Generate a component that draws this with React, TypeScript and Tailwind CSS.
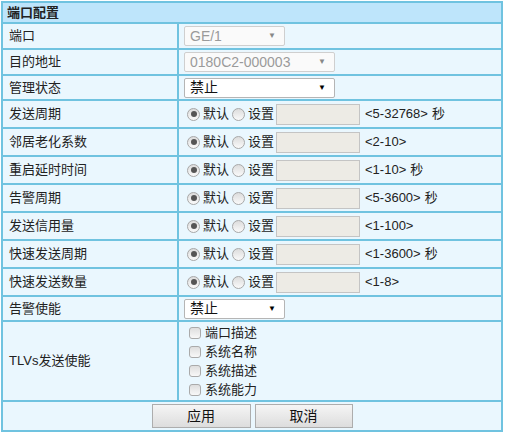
import * as React from 'react';

const FONT = { fontFamily: '"Liberation Sans", "Noto Sans CJK SC", sans-serif' };

interface TimerRow {
  label: string;
  range: string;
  unit?: string;
}

const TIMER_ROWS: TimerRow[] = [
  { label: '发送周期', range: '<5-32768>', unit: '秒' },
  { label: '邻居老化系数', range: '<2-10>' },
  { label: '重启延时时间', range: '<1-10>', unit: '秒' },
  { label: '告警周期', range: '<5-3600>', unit: '秒' },
  { label: '发送信用量', range: '<1-100>' },
  { label: '快速发送周期', range: '<1-3600>', unit: '秒' },
  { label: '快速发送数量', range: '<1-8>' },
];

const TLVS = ['端口描述', '系统名称', '系统描述', '系统能力'];

function Row({ label, h, children }: { label: string; h: string; children: React.ReactNode }) {
  return (
    <div className={`flex gap-[2px] ${h}`}>
      <div className="flex w-[174px] shrink-0 items-center bg-[#eaf7fe] pl-[6px]">{label}</div>
      <div className="flex flex-1 items-center bg-[#eaf7fe] pl-[5px]">{children}</div>
    </div>
  );
}

function Select({ value, width, disabled }: { value: string; width: string; disabled?: boolean }) {
  return (
    <div
      className={`flex h-[20px] items-center justify-between rounded-[2px] border pl-[5px] pr-[8px] text-[14px] ${width} ${
        disabled ? 'border-[#cfcfcf] bg-[#fafafa] text-[#9a9a9a]' : 'border-[#b5b5b5] bg-white text-[#111]'
      }`}
    >
      <span>{value}</span>
      <span className={`text-[8px] ${disabled ? 'text-[#888]' : 'text-black'}`}>▼</span>
    </div>
  );
}

function Radio({ checked }: { checked?: boolean }) {
  return (
    <span className="flex h-[13px] w-[13px] items-center justify-center rounded-full border border-[#a8a8a8] bg-gradient-to-b from-[#dcdcdc] to-[#fafafa]">
      {checked && <span className="h-[6px] w-[6px] rounded-full bg-[#555]" />}
    </span>
  );
}

export default function App() {
  return (
    <div className="p-[1px] text-[13px] text-[#222]" style={FONT}>
      <div className="flex w-[502px] flex-col gap-[2px] bg-[#70c3e0] p-[2px]">
        <div className="flex h-[19px] items-center bg-[#bee5fb] pl-[4px] font-bold">端口配置</div>
        <Row label="端口" h="h-[24px]">
          <Select value="GE/1" width="w-[101px]" disabled />
        </Row>
        <Row label="目的地址" h="h-[24px]">
          <Select value="0180C2-000003" width="w-[151px]" disabled />
        </Row>
        <Row label="管理状态" h="h-[23px]">
          <Select value="禁止" width="w-[151px]" />
        </Row>
        {TIMER_ROWS.map((r) => (
          <Row key={r.label} label={r.label} h="h-[26px]">
            <div className="ml-[3px] flex items-center">
              <Radio checked />
              <span className="ml-[3px]">默认</span>
              <span className="ml-[3px]">
                <Radio />
              </span>
              <span className="ml-[3px]">设置</span>
              <span className="ml-[2px] h-[21px] w-[84px] border border-[#c4c4c4] bg-[#edebe5]" />
              <span className="ml-[5px]">
                {r.range}
                {r.unit && <span className="ml-[4px]">{r.unit}</span>}
              </span>
            </div>
          </Row>
        ))}
        <Row label="告警使能" h="h-[23px]">
          <Select value="禁止" width="w-[101px]" />
        </Row>
        <Row label="TLVs发送使能" h="h-[78px]">
          <div className="ml-[5px] flex flex-col gap-[3px]">
            {TLVS.map((t) => (
              <div key={t} className="flex h-[16px] items-center">
                <span className="h-[12px] w-[12px] rounded-[3px] border border-[#aaaaaa] bg-gradient-to-b from-[#dedede] to-[#f8f8f8]" />
                <span className="ml-[4px]">{t}</span>
              </div>
            ))}
          </div>
        </Row>
        <div className="flex h-[28px] items-center justify-center gap-[4px] bg-[#eaf7fe]">
          <button className="h-[24px] w-[99px] border border-[#adadad] bg-gradient-to-b from-[#f5f5f5] to-[#dddddd] text-[14px] text-[#111]">
            应用
          </button>
          <button className="h-[24px] w-[98px] border border-[#adadad] bg-gradient-to-b from-[#f5f5f5] to-[#dddddd] text-[14px] text-[#111]">
            取消
          </button>
        </div>
      </div>
    </div>
  );
}
